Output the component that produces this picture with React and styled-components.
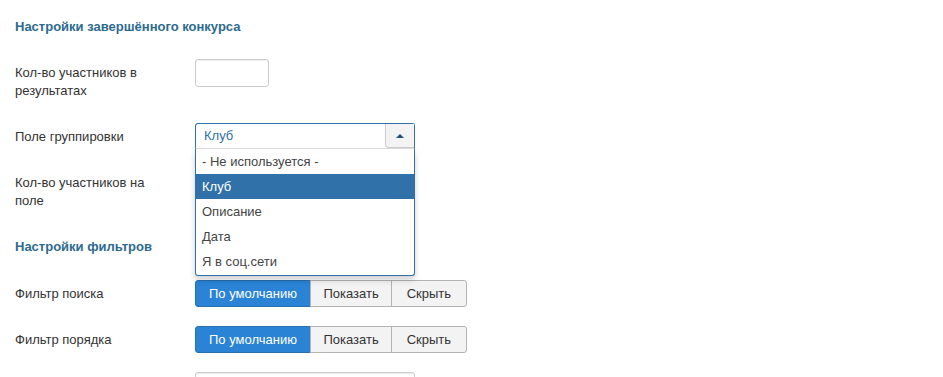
import React from "react";
import styled, { createGlobalStyle, css } from "styled-components";

const Global = createGlobalStyle`
  html, body { margin: 0; padding: 0; background: #fff; }
  body {
    font-family: "Liberation Sans", Arial, "Helvetica Neue", sans-serif;
    font-size: 13px;
    line-height: 18px;
    color: #333;
  }
`;

const Page = styled.div`
  padding: 18px 15px 0;
  height: 359px;
  overflow: hidden;
`;

const SectionTitle = styled.h3`
  margin: ${(p) => (p.$first ? "0" : "23px")} 0 ${(p) => (p.$first ? 23 : 24)}px;
  font-size: 13px;
  line-height: 18px;
  font-weight: bold;
  color: #2d6a8e;
`;

const Row = styled.div`
  display: flex;
  align-items: flex-start;
  margin-bottom: 18px;
  min-height: 28px;
`;

const Label = styled.div`
  width: 160px;
  margin-right: 20px;
  padding: 5px 0 5px;
  line-height: 18px;
  color: #333;
`;

const Controls = styled.div`
  position: relative;
  display: flex;
  align-items: flex-start;
`;

const TextInput = styled.input`
  box-sizing: border-box;
  width: ${(p) => p.$w || 74}px;
  height: 28px;
  margin: 0;
  padding: 4px 6px;
  border: 1px solid #ccc;
  border-radius: 3px;
  background: #fff;
  font: inherit;
  color: #555;
  box-shadow: inset 0 1px 1px rgba(0, 0, 0, 0.075);
`;

const Chosen = styled.div`
  position: relative;
  width: 220px;
  z-index: 10;
`;

const ChosenSingle = styled.div`
  box-sizing: border-box;
  display: flex;
  align-items: stretch;
  height: 26px;
  border: 1px solid #3071a9;
  border-bottom-color: #ddd;
  border-radius: 3px 3px 0 0;
  background: #fff;
`;

const ChosenValue = styled.span`
  flex: 1;
  padding: 0 8px;
  line-height: 24px;
  color: #3071a9;
`;

const ChosenArrow = styled.span`
  width: 28px;
  display: flex;
  align-items: center;
  justify-content: center;
  background: #f3f3f3;
  border-left: 1px solid #ccc;
  border-bottom: 1px solid #ccc;
  border-bottom-left-radius: 4px;
  &::after {
    content: "";
    width: 0;
    height: 0;
    border-left: 4px solid transparent;
    border-right: 4px solid transparent;
    border-bottom: 4px solid #1f4f7a;
  }
`;

const ChosenDrop = styled.ul`
  position: absolute;
  top: 26px;
  left: 0;
  right: 0;
  box-sizing: border-box;
  margin: 0;
  padding: 0 0 1px;
  list-style: none;
  background: #fff;
  border: 1px solid #3071a9;
  border-top: 0;
  border-radius: 0 0 3px 3px;
  box-shadow: 0 4px 6px rgba(0, 0, 0, 0.18);
`;

const ChosenOption = styled.li`
  height: 25px;
  line-height: 25px;
  padding: 0 6px;
  color: #444;
  ${(p) =>
    p.$active &&
    css`
      background: #3071a9;
      color: #fff;
    `}
`;

const BtnGroup = styled.div`
  display: inline-flex;
`;

const Btn = styled.button`
  box-sizing: border-box;
  height: 27px;
  margin: 0 0 0 -1px;
  padding: 0 ${(p) => p.$px || 12}px;
  font: inherit;
  line-height: 25px;
  border: 1px solid #b3b3b3;
  background: #f3f3f3;
  color: #333;
  border-radius: 0;
  cursor: pointer;
  &:first-child {
    margin-left: 0;
    border-radius: 3px 0 0 3px;
  }
  &:last-child {
    border-radius: 0 3px 3px 0;
  }
  ${(p) =>
    p.$active &&
    css`
      background: #2a83d4;
      border-color: #2a6fb0;
      color: #fff;
    `}
`;

const options = ["- Не используется -", "Клуб", "Описание", "Дата", "Я в соц.сети"];

function Toggle() {
  return (
    <BtnGroup>
      <Btn $active $px={13}>По умолчанию</Btn>
      <Btn $px={12.5}>Показать</Btn>
      <Btn $px={14.5}>Скрыть</Btn>
    </BtnGroup>
  );
}

export default function App() {
  return (
    <>
      <Global />
      <Page>
        <SectionTitle $first>Настройки завершённого конкурса</SectionTitle>
        <Row>
          <Label>Кол-во участников в результатах</Label>
          <Controls>
            <TextInput type="text" />
          </Controls>
        </Row>
        <Row>
          <Label>Поле группировки</Label>
          <Controls>
            <Chosen>
              <ChosenSingle>
                <ChosenValue>Клуб</ChosenValue>
                <ChosenArrow />
              </ChosenSingle>
              <ChosenDrop>
                {options.map((o) => (
                  <ChosenOption key={o} $active={o === "Клуб"}>
                    {o}
                  </ChosenOption>
                ))}
              </ChosenDrop>
            </Chosen>
          </Controls>
        </Row>
        <Row>
          <Label>Кол-во участников на поле</Label>
          <Controls>
            <TextInput type="text" />
          </Controls>
        </Row>
        <SectionTitle>Настройки фильтров</SectionTitle>
        <Row>
          <Label>Фильтр поиска</Label>
          <Controls>
            <Toggle />
          </Controls>
        </Row>
        <Row>
          <Label>Фильтр порядка</Label>
          <Controls>
            <Toggle />
          </Controls>
        </Row>
        <Row>
          <Label />
          <Controls>
            <TextInput type="text" $w={220} />
          </Controls>
        </Row>
      </Page>
    </>
  );
}
